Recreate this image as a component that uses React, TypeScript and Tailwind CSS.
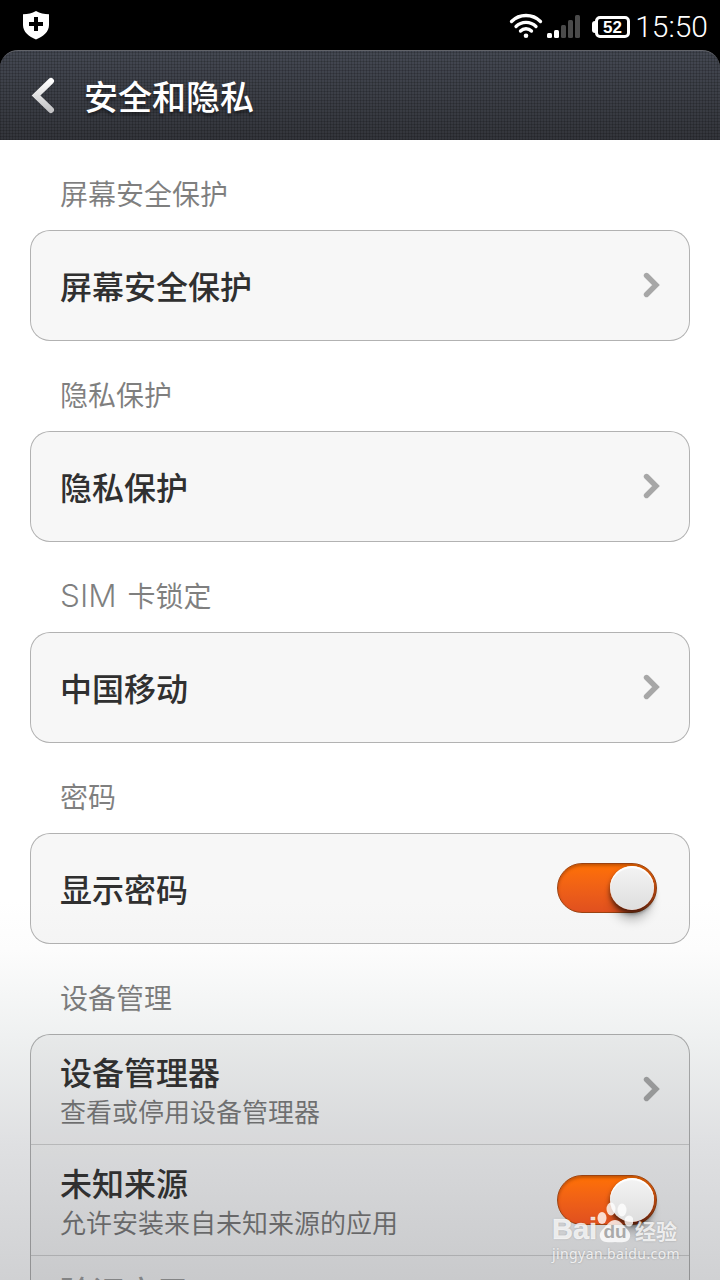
import type { ReactNode } from "react";

type Item = {
  title: string;
  summary?: string;
  control: "arrow" | "switch" | "none";
  disabled?: boolean;
};

const sections: { latin?: string; label: string; items: Item[] }[] = [
  { label: "屏幕安全保护", items: [{ title: "屏幕安全保护", control: "arrow" }] },
  { label: "隐私保护", items: [{ title: "隐私保护", control: "arrow" }] },
  { latin: "SIM", label: "卡锁定", items: [{ title: "中国移动", control: "arrow" }] },
  { label: "密码", items: [{ title: "显示密码", control: "switch" }] },
  {
    label: "设备管理",
    items: [
      { title: "设备管理器", summary: "查看或停用设备管理器", control: "arrow" },
      { title: "未知来源", summary: "允许安装来自未知来源的应用", control: "switch" },
      { title: "验证应用", control: "none", disabled: true },
    ],
  },
];

function StatusBar() {
  return (
    <div className="flex h-[50px] shrink-0 items-start bg-black text-white">
      <svg className="mt-[11px] ml-[22px]" width="28" height="29" viewBox="0 0 28 29">
        <path d="M14 0C10 2.4 6 3.3 1 3.3V14c0 7 6 11.6 13 14.5C21 25.6 27 21 27 14V3.3C22 3.3 18 2.4 14 0Z" fill="#fff" />
        <path d="M14 6v14M7 13h14" stroke="#000" strokeWidth="4" />
      </svg>
      <svg className="mt-[13px] ml-auto" width="34" height="26" viewBox="0 0 34 26" fill="none" stroke="#fff" strokeWidth="3.3" strokeLinecap="round">
        <path d="M2.5 8.5C10.5 0.5 23.5 0.5 31.5 8.5" />
        <path d="M7 13.5C12.5 8 21.5 8 27 13.5" />
        <path d="M11.5 18C14.5 15 19.5 15 22.5 18" />
        <circle cx="17" cy="22.7" r="2.3" fill="#fff" stroke="none" />
      </svg>
      <svg className="mt-[15px] ml-[4px]" width="33" height="23" viewBox="0 0 33 23">
        <rect x="0" y="18" width="5" height="5" rx="1.5" fill="#fff" />
        <rect x="7" y="15" width="5" height="8" rx="1.5" fill="#fff" />
        <rect x="14" y="10" width="5" height="13" rx="1.5" fill="#4a4a4a" />
        <rect x="21" y="5" width="5" height="18" rx="1.5" fill="#4a4a4a" />
        <rect x="28" y="0" width="5" height="23" rx="1.5" fill="#4a4a4a" />
      </svg>
      <div className="mt-[16px] ml-[12px] flex h-[22px] w-[38px] items-center">
        <div className="h-[12px] w-[4px] shrink-0 rounded-l-[3px] bg-white" />
        <div className="-ml-px flex h-[22px] w-[35px] shrink-0 items-center justify-center rounded-[5px] border-[3px] border-white font-['Liberation_Sans'] text-[17px] leading-none font-bold">
          52
        </div>
      </div>
      <div className="mt-[10px] mr-[12px] ml-[5px] w-[73px] text-right font-[Roboto,sans-serif] text-[30px] leading-[34px] font-light">
        15:50
      </div>
    </div>
  );
}

function Header() {
  return (
    <div className="flex h-[90px] shrink-0 bg-black">
      <div className="flex flex-1 items-center overflow-hidden rounded-t-[18px] border-t border-[#62646a] bg-[repeating-linear-gradient(0deg,rgba(0,0,0,0.16)_0_1px,transparent_1px_3px),repeating-linear-gradient(90deg,rgba(0,0,0,0.16)_0_1px,transparent_1px_3px),linear-gradient(#444852,#33353b)]">
        <svg className="ml-[29px]" width="26" height="38" viewBox="0 0 26 38" fill="none">
          <defs>
            <linearGradient id="back" x1="0" y1="0" x2="0" y2="1">
              <stop offset="0" stopColor="#fff" />
              <stop offset="1" stopColor="#c4c4c6" />
            </linearGradient>
          </defs>
          <path d="M22 4L7 18.5l15 14.5" stroke="url(#back)" strokeWidth="6" strokeLinecap="round" />
        </svg>
        <h1 className="ml-[29px] text-[34px] leading-none font-medium text-white [text-shadow:0_3px_3px_rgba(0,0,0,0.4)]">安全和隐私</h1>
      </div>
    </div>
  );
}

function Arrow() {
  return (
    <svg className="mr-[29px] mb-[2px]" width="17" height="26" viewBox="0 0 17 26" fill="none">
      <path d="M3.5 3.5L13 13l-9.5 9.5" stroke="#000" strokeOpacity="0.32" strokeWidth="5.4" strokeLinecap="round" />
    </svg>
  );
}

function Switch() {
  return (
    <div className="mr-[32px] mb-px flex h-[50px] w-[100px] items-center justify-end rounded-full border border-[#9b4312] bg-linear-to-b from-[#ff7103] to-[#e0501f] pr-[2px] shadow-[inset_0_2px_3px_rgba(90,30,0,0.35)]">
      <div className="size-[44px] rounded-full bg-linear-to-b from-[#f4f4f4] to-[#dedede] shadow-[inset_0_2px_1px_#fff,0_3px_5px_rgba(0,0,0,0.6),0_13px_12px_-4px_rgba(0,0,0,0.3)]" />
    </div>
  );
}

function Row({ item }: { item: Item }) {
  return (
    <div className="flex h-[111px] items-center justify-between border-b border-black/15 pl-[29px] first:h-[110px] last:h-[109px] last:border-b-0">
      <div className={item.summary ? "pt-[2px]" : "pb-[1px]"}>
        <div className={item.disabled ? "text-[32px] leading-[40px] font-medium text-black/35" : "text-[32px] leading-[40px] font-medium text-[#303030]"}>
          {item.title}
        </div>
        {item.summary && <div className="text-[26px] leading-[39px] text-black/50">{item.summary}</div>}
        {item.disabled && <div className="h-[40px]" />}
      </div>
      {item.control === "arrow" && <Arrow />}
      {item.control === "switch" && <Switch />}
    </div>
  );
}

function Section({ latin, label, children }: { latin?: string; label: string; children: ReactNode }) {
  return (
    <section className="shrink-0 px-[30px]">
      <h2 className="flex h-[90px] items-center pt-[16px] pl-[30px] text-[28px] text-black/50">
        {latin && <span className="mr-[11px] pt-[2px] font-[Inter,sans-serif] text-[31.5px] font-light">{latin}</span>}
        {label}
      </h2>
      <div className="rounded-[20px] border border-black/30 bg-black/[0.033] bg-clip-padding">{children}</div>
    </section>
  );
}

function Watermark() {
  return (
    <div className="absolute top-[1200px] left-[552px] w-[130px] text-white/80 [text-shadow:0_0_2px_rgba(0,0,0,0.25)]">
      <div className="flex h-[43px] items-end">
        <span className="w-[43px] font-['Liberation_Sans'] text-[29px] leading-[27px] font-bold [-webkit-text-stroke:0.5px_rgba(255,255,255,0.6)]">Bai</span>
        <div className="relative flex h-[43px] w-[37px] items-end justify-center">
          <svg className="absolute inset-0" width="38" height="43" viewBox="0 0 38 43" fill="currentColor">
            <ellipse cx="7" cy="18" rx="4.5" ry="6" />
            <ellipse cx="16" cy="9" rx="4.5" ry="6.5" />
            <ellipse cx="27" cy="10" rx="4.5" ry="6.5" />
            <ellipse cx="34" cy="21" rx="4.5" ry="5.5" />
            <path d="M20 20c5 0 7 4 10 7 3 3 6 6 5 10-1 5-7 6-15 5-8 1-14 0-15-5-1-4 2-7 5-10 3-3 5-7 10-7Z" />
          </svg>
          <span className="relative pl-[3px] font-['Liberation_Sans'] text-[19px] leading-[22px] font-bold text-[#aaa] [text-shadow:none]">du</span>
        </div>
        <span className="pl-[3px] text-[21px] leading-[26px] font-bold">经验</span>
      </div>
      <div className="pt-[2px] font-['Noto_Sans',sans-serif] text-[14px] leading-[18px] tracking-[0.4px]">jingyan.baidu.com</div>
    </div>
  );
}

export default function App() {
  return (
    <div className="relative flex h-[1280px] w-[720px] flex-col overflow-hidden bg-[linear-gradient(#fff_900px,#fcfcfc_950px,#eff1f1_1035px,#dfe0e2_1144px,#d0d1d3_1280px)] font-['Noto_Sans_CJK_SC',sans-serif]">
      <StatusBar />
      <Header />
      <main className="flex min-h-0 flex-1 flex-col overflow-hidden">
        {sections.map((section) => (
          <Section key={section.label} latin={section.latin} label={section.label}>
            {section.items.map((item) => (
              <Row key={item.title} item={item} />
            ))}
          </Section>
        ))}
      </main>
      <Watermark />
    </div>
  );
}
